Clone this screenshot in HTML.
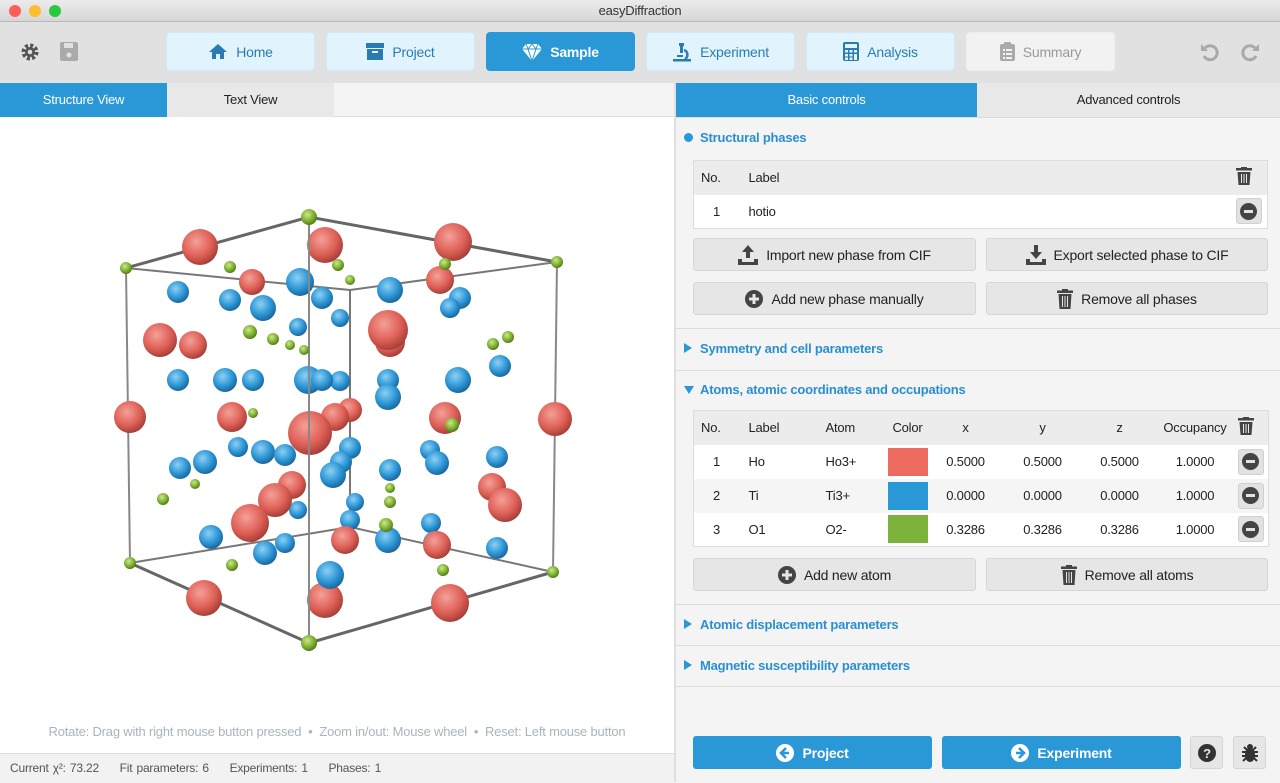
<!DOCTYPE html>
<html><head><meta charset="utf-8">
<style>
*{box-sizing:border-box;margin:0;padding:0}
body{width:1280px;height:782px;overflow:hidden;font-family:"Liberation Sans",sans-serif;font-size:13px;color:#222;background:#f4f4f4;position:relative;letter-spacing:-0.2px}
.a{position:absolute}
.title{left:0;top:0;width:1280px;height:22px;background:linear-gradient(#ececec,#d6d6d6);border-bottom:1px solid #b8b8b8;text-align:center;line-height:22px;font-size:13px;color:#333}
.dot{top:5px;width:12px;height:12px;border-radius:50%}
.tb{left:0;top:22px;width:1280px;height:61px;background:#e1e1e1}
.nb{top:32px;width:149px;height:39px;border-radius:4px;background:#e1f4fe;border:1px solid #cfe9f8;color:#2a7bb2;display:flex;align-items:center;justify-content:center;gap:8px;font-size:14px}
.nb.act{background:#2a98d6;border-color:#2a98d6;color:#fff;font-weight:bold}
.nb.dis{background:#f2f2f2;border-color:#eee;color:#999}
.tab{top:83px;height:34px;line-height:34px;text-align:center;font-size:13px}
.hd{left:684px;color:#2a8fd0;font-weight:bold;font-size:13px}
.btn{height:33px;background:#e6e6e6;border:1px solid #d6d6d6;border-radius:3px;display:flex;align-items:center;justify-content:center;gap:8px;font-size:14px;color:#222}
.sep{left:676px;width:604px;height:1px;background:#ddd}
table{border-collapse:collapse;table-layout:fixed}
.tbl{left:693px;width:575px;border:1px solid #ddd;background:#fff}
.tbl td{height:34px;font-size:13px}
.hr td{background:#ececec}
.alt td{background:#f5f5f5}
.mb{width:26px;height:26px;background:#e2e2e2;border:1px solid #d0d0d0;border-radius:3px;display:flex;align-items:center;justify-content:center}
.mi{width:17px;height:17px;border-radius:50%;background:#444;position:relative}
.mi:after{content:"";position:absolute;left:4px;top:7px;width:9px;height:3px;background:#e2e2e2}
.bb{top:736px;height:33px;background:#2a98d6;border-radius:3px;color:#fff;font-weight:bold;display:flex;align-items:center;justify-content:center;gap:8px;font-size:14px}
.ib{top:736px;width:33px;height:33px;background:#e6e6e6;border:1px solid #d6d6d6;border-radius:3px;display:flex;align-items:center;justify-content:center}
.c{text-align:center}
</style></head><body>
<div class="a title">easyDiffraction</div>
<div class="a dot" style="left:9px;background:#fd5e57"></div>
<div class="a dot" style="left:29px;background:#febc2e"></div>
<div class="a dot" style="left:49px;background:#28c840"></div>
<div class="a tb"></div>
<svg class="a" style="left:20px;top:42px" width="20" height="20" viewBox="0 0 20 20"><circle cx="10" cy="10" r="6.5" fill="none" stroke="#555" stroke-width="4" stroke-dasharray="3 2.1"/><circle cx="10" cy="10" r="5" fill="#555"/><circle cx="10" cy="10" r="2.3" fill="#e1e1e1"/></svg>
<svg class="a" style="left:60px;top:42px" width="18" height="19"><rect x="0" y="0" width="18" height="19" rx="2" fill="#aaa"/><rect x="4" y="1" width="9" height="5" fill="#e1e1e1"/><circle cx="9" cy="13" r="2.5" fill="#e1e1e1"/></svg>
<div class="a nb" style="left:166px"><svg width="20" height="17" viewBox="0 0 20 17"><path d="M10 1L1 9h3v7h4v-5h4v5h4V9h3z" fill="#2a7bb2"/></svg>Home</div>
<div class="a nb" style="left:326px"><svg width="18" height="17"><rect x="0" y="0" width="18" height="5" fill="#2a7bb2"/><rect x="1" y="6" width="16" height="11" fill="#2a7bb2"/><rect x="6" y="8" width="6" height="2" fill="#e1f4fe"/></svg>Project</div>
<div class="a nb act" style="left:486px"><svg width="20" height="18" viewBox="0 0 20 18"><path d="M4 1h12l4 5-10 12L0 6z" fill="#fff"/><path d="M0 6h20M6 6l4 12 4-12M4 1l2 5 4-5 4 5 2-5" stroke="#2a98d6" stroke-width="1" fill="none"/></svg>Sample</div>
<div class="a nb" style="left:646px"><svg width="20" height="20"><path d="M7 1h5v3h-1v7h-3V4H7z" fill="#2a7bb2"/><path d="M12 8a5 5 0 0 1 1 9" stroke="#2a7bb2" stroke-width="2.5" fill="none"/><rect x="1" y="17" width="18" height="2.5" fill="#2a7bb2"/><rect x="5" y="13" width="6" height="2" fill="#2a7bb2"/></svg>Experiment</div>
<div class="a nb" style="left:806px"><svg width="16" height="19"><rect width="16" height="19" rx="2" fill="#2a7bb2"/><rect x="2" y="2" width="12" height="4" fill="#e1f4fe"/><g fill="#e1f4fe"><rect x="2" y="8" width="3" height="2.5"/><rect x="6.5" y="8" width="3" height="2.5"/><rect x="11" y="8" width="3" height="2.5"/><rect x="2" y="12" width="3" height="2.5"/><rect x="6.5" y="12" width="3" height="2.5"/><rect x="11" y="12" width="3" height="6"/><rect x="2" y="15.5" width="3" height="2.5"/><rect x="6.5" y="15.5" width="3" height="2.5"/></g></svg>Analysis</div>
<div class="a nb dis" style="left:966px"><svg width="15" height="19"><rect y="2" width="15" height="17" rx="2" fill="#aaa"/><rect x="4" y="0" width="7" height="4" rx="1" fill="#aaa"/><g fill="#f2f2f2"><rect x="3" y="7" width="2" height="2"/><rect x="6" y="7" width="6" height="2"/><rect x="3" y="11" width="2" height="2"/><rect x="6" y="11" width="6" height="2"/><rect x="3" y="15" width="2" height="2"/><rect x="6" y="15" width="6" height="2"/></g></svg>Summary</div>
<svg class="a" style="left:1200px;top:42px" width="20" height="20"><path d="M5 6A7 7 0 1 1 4 14" stroke="#aaa" stroke-width="3" fill="none"/><path d="M1 2v7h7z" fill="#aaa"/></svg>
<svg class="a" style="left:1240px;top:42px" width="20" height="20"><path d="M15 6A7 7 0 1 0 16 14" stroke="#aaa" stroke-width="3" fill="none"/><path d="M19 2v7h-7z" fill="#aaa"/></svg>

<div class="a" style="left:0;top:83px;width:674px;height:670px;background:#fff"></div>
<div class="a" style="left:0;top:83px;width:674px;height:34px;background:#f4f4f4;border-bottom:1px solid #ddd"></div>
<div class="a tab" style="left:0;width:167px;background:#2a98d6;color:#fff">Structure View</div>
<div class="a tab" style="left:167px;width:167px;background:#e8e8e8">Text View</div>
<div class="a" style="left:674px;top:83px;width:2px;height:699px;background:#e0e0e0"></div>
<svg class="a" style="left:0;top:117px" width="674" height="636" viewBox="0 117 674 636">
<defs>
<radialGradient id="r" cx="0.4" cy="0.35" r="0.7"><stop offset="0" stop-color="#f4a098"/><stop offset="0.6" stop-color="#de5f56"/><stop offset="1" stop-color="#9c3a33"/></radialGradient>
<radialGradient id="b" cx="0.4" cy="0.35" r="0.7"><stop offset="0" stop-color="#8cd0f4"/><stop offset="0.6" stop-color="#2a94d4"/><stop offset="1" stop-color="#1a5f90"/></radialGradient>
<radialGradient id="g" cx="0.4" cy="0.35" r="0.7"><stop offset="0" stop-color="#cde88a"/><stop offset="0.6" stop-color="#7aae2e"/><stop offset="1" stop-color="#4a7018"/></radialGradient>
</defs>
<g stroke="#777" stroke-width="2" fill="none">
<path d="M350 290L350 527M130 563L350 527L553 572M126 268L350 290L557 262"/>
</g>
<g stroke="#666" stroke-width="3" fill="none">
<path d="M126 268L309 217L557 262M130 563L309 643L553 572"/>
</g>
<g stroke="#888" stroke-width="2" fill="none"><path d="M126 268L130 563M557 262L553 572"/></g>
<g fill="url(#b)">
<circle cx="178" cy="292" r="11"/><circle cx="230" cy="300" r="11"/><circle cx="263" cy="308" r="13"/><circle cx="300" cy="282" r="14"/><circle cx="322" cy="298" r="11"/><circle cx="390" cy="290" r="13"/><circle cx="460" cy="298" r="11"/><circle cx="450" cy="308" r="10"/><circle cx="225" cy="380" r="12"/><circle cx="253" cy="380" r="11"/><circle cx="178" cy="380" r="11"/><circle cx="308" cy="380" r="14"/><circle cx="340" cy="381" r="10"/><circle cx="322" cy="380" r="11"/><circle cx="388" cy="380" r="11"/><circle cx="388" cy="397" r="13"/><circle cx="458" cy="380" r="13"/><circle cx="500" cy="366" r="11"/><circle cx="298" cy="327" r="9"/><circle cx="340" cy="318" r="9"/><circle cx="238" cy="447" r="10"/><circle cx="263" cy="452" r="12"/><circle cx="285" cy="455" r="11"/><circle cx="180" cy="468" r="11"/><circle cx="205" cy="462" r="12"/><circle cx="350" cy="448" r="11"/><circle cx="341" cy="462" r="11"/><circle cx="390" cy="470" r="11"/><circle cx="430" cy="450" r="10"/><circle cx="437" cy="463" r="12"/><circle cx="497" cy="457" r="11"/><circle cx="355" cy="502" r="9"/><circle cx="298" cy="510" r="9"/><circle cx="211" cy="537" r="12"/><circle cx="285" cy="543" r="10"/><circle cx="350" cy="520" r="10"/><circle cx="431" cy="523" r="10"/><circle cx="435" cy="543" r="12"/><circle cx="497" cy="548" r="11"/>
</g>
<g fill="url(#r)">
<circle cx="200" cy="247" r="18"/><circle cx="325" cy="245" r="18"/><circle cx="453" cy="242" r="19"/><circle cx="160" cy="340" r="17"/><circle cx="193" cy="345" r="14"/><circle cx="390" cy="342" r="15"/><circle cx="388" cy="330" r="20"/><circle cx="130" cy="417" r="16"/><circle cx="232" cy="417" r="15"/><circle cx="350" cy="410" r="12"/><circle cx="335" cy="417" r="14"/><circle cx="310" cy="433" r="22"/><circle cx="445" cy="418" r="16"/><circle cx="555" cy="419" r="17"/><circle cx="292" cy="485" r="14"/><circle cx="275" cy="500" r="17"/><circle cx="492" cy="487" r="14"/><circle cx="505" cy="505" r="17"/><circle cx="252" cy="282" r="13"/><circle cx="440" cy="280" r="14"/><circle cx="345" cy="540" r="14"/><circle cx="437" cy="545" r="14"/><circle cx="250" cy="523" r="19"/><circle cx="204" cy="598" r="18"/><circle cx="325" cy="600" r="18"/><circle cx="450" cy="603" r="19"/>
</g>
<g fill="url(#b)"><circle cx="330" cy="575" r="14"/><circle cx="388" cy="540" r="13"/><circle cx="265" cy="553" r="12"/><circle cx="333" cy="475" r="13"/></g>
<path d="M309 217L309 643" stroke="#888" stroke-width="2"/>
<g fill="url(#g)">
<circle cx="126" cy="268" r="6"/><circle cx="309" cy="217" r="8"/><circle cx="557" cy="262" r="6"/><circle cx="130" cy="563" r="6"/><circle cx="309" cy="643" r="8"/><circle cx="553" cy="572" r="6"/><circle cx="230" cy="267" r="6"/><circle cx="338" cy="265" r="6"/><circle cx="445" cy="264" r="6"/><circle cx="250" cy="332" r="7"/><circle cx="273" cy="339" r="6"/><circle cx="290" cy="345" r="5"/><circle cx="304" cy="350" r="5"/><circle cx="493" cy="344" r="6"/><circle cx="508" cy="337" r="6"/><circle cx="253" cy="413" r="5"/><circle cx="452" cy="425" r="7"/><circle cx="163" cy="499" r="6"/><circle cx="195" cy="484" r="5"/><circle cx="390" cy="488" r="5"/><circle cx="390" cy="502" r="6"/><circle cx="386" cy="525" r="7"/><circle cx="232" cy="565" r="6"/><circle cx="443" cy="570" r="6"/><circle cx="350" cy="280" r="5"/>
</g>
</svg>
<div class="a" style="left:0;top:724px;width:674px;text-align:center;color:#aab4bc;font-size:13px">Rotate: Drag with right mouse button pressed &nbsp;•&nbsp; Zoom in/out: Mouse wheel &nbsp;•&nbsp; Reset: Left mouse button</div>
<div class="a" style="left:0;top:753px;width:674px;height:29px;background:#f2f2f2;border-top:1px solid #ddd;font-size:12px;color:#555;line-height:29px;padding-left:10px;word-spacing:1px">Current χ²: 73.22 &nbsp;&nbsp;&nbsp; Fit parameters: 6 &nbsp;&nbsp;&nbsp; Experiments: 1 &nbsp;&nbsp;&nbsp; Phases: 1</div>

<div class="a tab" style="left:676px;width:301px;background:#2a98d6;color:#fff">Basic controls</div>
<div class="a tab" style="left:977px;width:303px;background:#e8e8e8">Advanced controls</div>
<div class="a" style="left:676px;top:117px;width:604px;height:1px;background:#ddd"></div>

<div class="a hd" style="top:130px"><span style="display:inline-block;width:9px;height:9px;border-radius:50%;background:#2a98d6;margin-right:7px"></span>Structural phases</div>
<table class="a tbl" style="top:160px">
<tr class="hr"><td style="width:55px;padding-left:7px">No.</td><td>Label</td><td style="width:32px"><svg width="16" height="18"><rect x="0" y="1" width="16" height="2.5" fill="#444"/><rect x="5" y="0" width="6" height="2" fill="#444"/><path d="M1.5 5h13l-1 13h-11z" fill="#444"/><path d="M5.5 7v9M8 7v9M10.5 7v9" stroke="#ececec" stroke-width="1"/></svg></td></tr>
<tr><td style="padding-left:19px">1</td><td>hotio</td><td><div class="mb"><div class="mi"></div></div></td></tr>
</table>
<div class="a btn" style="left:693px;top:238px;width:283px"><svg width="20" height="20"><path d="M10 0l6 7h-4v6H8V7H4z" fill="#444"/><path d="M0 14h4v3h12v-3h4v6H0z" fill="#444"/></svg>Import new phase from CIF</div>
<div class="a btn" style="left:986px;top:238px;width:282px"><svg width="20" height="20"><path d="M10 14l6-7h-4V0H8v7H4z" fill="#444"/><path d="M0 14h4v3h12v-3h4v6H0z" fill="#444"/></svg>Export selected phase to CIF</div>
<div class="a btn" style="left:693px;top:282px;width:283px"><svg width="18" height="18"><circle cx="9" cy="9" r="9" fill="#444"/><path d="M9 4v10M4 9h10" stroke="#e6e6e6" stroke-width="3"/></svg>Add new phase manually</div>
<div class="a btn" style="left:986px;top:282px;width:282px"><svg width="16" height="20"><rect x="0" y="1.5" width="16" height="2.5" fill="#444"/><rect x="5" y="0" width="6" height="2" fill="#444"/><path d="M1.5 5h13l-1 15h-11z" fill="#444"/><path d="M5.5 7v11M8 7v11M10.5 7v11" stroke="#e6e6e6" stroke-width="1"/></svg>Remove all phases</div>
<div class="a sep" style="top:328px"></div>
<div class="a hd" style="top:341px"><span style="display:inline-block;width:0;height:0;border-left:8px solid #2a98d6;border-top:5px solid transparent;border-bottom:5px solid transparent;margin-right:8px"></span>Symmetry and cell parameters</div>
<div class="a sep" style="top:370px"></div>
<div class="a hd" style="top:382px"><span style="display:inline-block;width:0;height:0;border-top:8px solid #2a98d6;border-left:5px solid transparent;border-right:5px solid transparent;margin-right:6px"></span>Atoms, atomic coordinates and occupations</div>
<table class="a tbl" style="top:410px">
<colgroup><col style="width:55px"><col style="width:77px"><col style="width:57px"><col style="width:50px"><col style="width:66px"><col style="width:88px"><col style="width:66px"><col style="width:85px"><col style="width:31px"></colgroup>
<tr class="hr"><td style="padding-left:7px">No.</td><td>Label</td><td>Atom</td><td class="c">Color</td><td class="c">x</td><td class="c">y</td><td class="c">z</td><td class="c">Occupancy</td><td><svg width="16" height="18"><rect x="0" y="1" width="16" height="2.5" fill="#444"/><rect x="5" y="0" width="6" height="2" fill="#444"/><path d="M1.5 5h13l-1 13h-11z" fill="#444"/><path d="M5.5 7v9M8 7v9M10.5 7v9" stroke="#ececec" stroke-width="1"/></svg></td></tr>
<tr><td style="padding-left:19px">1</td><td>Ho</td><td>Ho3+</td><td class="c"><div style="width:40px;height:28px;background:#ed6a5e;margin:auto"></div></td><td class="c">0.5000</td><td class="c">0.5000</td><td class="c">0.5000</td><td class="c">1.0000</td><td><div class="mb"><div class="mi"></div></div></td></tr>
<tr class="alt"><td style="padding-left:19px">2</td><td>Ti</td><td>Ti3+</td><td class="c"><div style="width:40px;height:28px;background:#2a98d6;margin:auto"></div></td><td class="c">0.0000</td><td class="c">0.0000</td><td class="c">0.0000</td><td class="c">1.0000</td><td><div class="mb"><div class="mi"></div></div></td></tr>
<tr><td style="padding-left:19px">3</td><td>O1</td><td>O2-</td><td class="c"><div style="width:40px;height:28px;background:#7cb13a;margin:auto"></div></td><td class="c">0.3286</td><td class="c">0.3286</td><td class="c">0.3286</td><td class="c">1.0000</td><td><div class="mb"><div class="mi"></div></div></td></tr>
</table>
<div class="a btn" style="left:693px;top:558px;width:283px"><svg width="18" height="18"><circle cx="9" cy="9" r="9" fill="#444"/><path d="M9 4v10M4 9h10" stroke="#e6e6e6" stroke-width="3"/></svg>Add new atom</div>
<div class="a btn" style="left:986px;top:558px;width:282px"><svg width="16" height="20"><rect x="0" y="1.5" width="16" height="2.5" fill="#444"/><rect x="5" y="0" width="6" height="2" fill="#444"/><path d="M1.5 5h13l-1 15h-11z" fill="#444"/><path d="M5.5 7v11M8 7v11M10.5 7v11" stroke="#e6e6e6" stroke-width="1"/></svg>Remove all atoms</div>
<div class="a sep" style="top:604px"></div>
<div class="a hd" style="top:617px"><span style="display:inline-block;width:0;height:0;border-left:8px solid #2a98d6;border-top:5px solid transparent;border-bottom:5px solid transparent;margin-right:8px"></span>Atomic displacement parameters</div>
<div class="a sep" style="top:645px"></div>
<div class="a hd" style="top:658px"><span style="display:inline-block;width:0;height:0;border-left:8px solid #2a98d6;border-top:5px solid transparent;border-bottom:5px solid transparent;margin-right:8px"></span>Magnetic susceptibility parameters</div>
<div class="a sep" style="top:686px"></div>

<div class="a bb" style="left:693px;width:239px"><svg width="18" height="18"><circle cx="9" cy="9" r="9" fill="#fff"/><path d="M10 4L5 9l5 5M5 9h8" stroke="#2a98d6" stroke-width="2.6" fill="none"/></svg>Project</div>
<div class="a bb" style="left:942px;width:239px"><svg width="18" height="18"><circle cx="9" cy="9" r="9" fill="#fff"/><path d="M8 4l5 5-5 5M13 9H5" stroke="#2a98d6" stroke-width="2.6" fill="none"/></svg>Experiment</div>
<div class="a ib" style="left:1190px"><svg width="18" height="18"><circle cx="9" cy="9" r="9" fill="#333"/><text x="9" y="14" text-anchor="middle" font-size="13" font-weight="bold" fill="#e6e6e6" font-family="Liberation Sans">?</text></svg></div>
<div class="a ib" style="left:1233px"><svg width="18" height="18"><ellipse cx="9" cy="11" rx="5" ry="7" fill="#333"/><circle cx="9" cy="3" r="3" fill="#333"/><path d="M1 8h16M1 12h16M2 17l3-3M16 17l-3-3M3 3l3 3M15 3l-3 3" stroke="#333" stroke-width="2"/></svg></div>
</body></html>
